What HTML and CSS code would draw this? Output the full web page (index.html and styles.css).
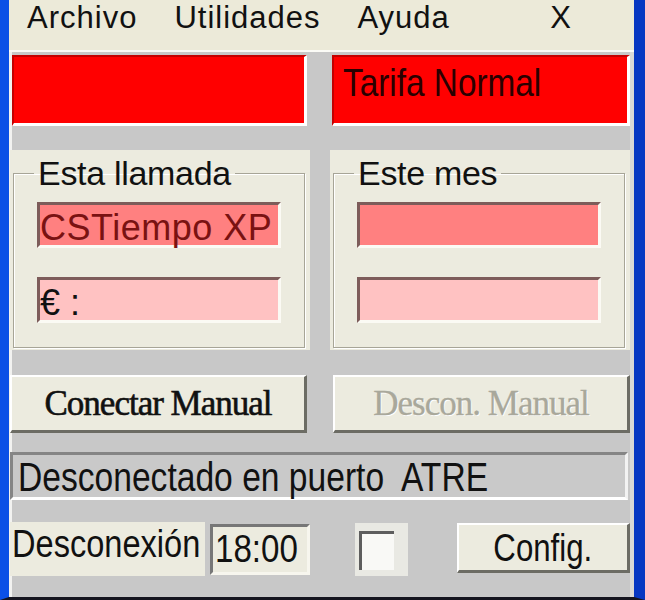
FILE: index.html
```html
<!DOCTYPE html>
<html lang="es">
<head>
<meta charset="utf-8">
<title>CSTiempo XP</title>
<link rel="stylesheet" href="styles.css">
</head>
<body>
<div class="window">
  <div class="client">
    <nav class="menubar">
      <span class="menu-item">Archivo</span>
      <span class="menu-item">Utilidades</span>
      <span class="menu-item">Ayuda</span>
      <span class="menu-item menu-close">X</span>
    </nav>
    <div class="tariff-row">
      <div class="tariff-box tariff-left"></div>
      <div class="tariff-box tariff-right"><span class="narrow tariff-text">Tarifa Normal</span></div>
    </div>
    <div class="groups">
      <div class="group">
        <fieldset class="frame">
          <legend class="legend">Esta llamada</legend>
          <div class="field field-salmon">CSTiempo XP</div>
          <div class="field field-pink">€ :</div>
        </fieldset>
      </div>
      <div class="group">
        <fieldset class="frame">
          <legend class="legend">Este mes</legend>
          <div class="field field-salmon"></div>
          <div class="field field-pink"></div>
        </fieldset>
      </div>
    </div>
    <div class="buttons">
      <button class="btn btn-wide" type="button">Conectar Manual</button>
      <button class="btn btn-wide" type="button" disabled>Descon. Manual</button>
    </div>
    <div class="status"><span class="narrow status-text">Desconectado en puerto&nbsp; ATRE</span></div>
    <div class="bottom-row">
      <span class="label"><span class="narrow label-text">Desconexión</span></span>
      <div class="time"><span class="narrow time-text">18:00</span></div>
      <div class="check-wrap"><span class="check"></span></div>
      <button class="btn btn-config" type="button"><span class="narrow config-text">Config.</span></button>
    </div>
  </div>
</div>
</body>
</html>
```

FILE: styles.css
```css
html, body {
  margin: 0;
  padding: 0;
  background: #c8c8c8;
}

.window {
  width: 645px;
  height: 600px;
  box-sizing: border-box;
  display: flex;
  border-left: 9px solid #0b50e6;
  border-right: 11px solid #0637c2;
  border-bottom: 3px solid #15151f;
  overflow: hidden;
}

.client {
  flex: 1;
  display: flex;
  flex-direction: column;
  background: #c8c8c8;
  box-shadow: inset 3px 0 0 #f2f2f0, inset -4px 0 0 #d9d9d6;
  font-family: "Liberation Sans", Arial, sans-serif;
  color: #111;
}

/* condensed look of the scaled bitmap font */
.narrow {
  display: inline-block;
  transform-origin: left center;
  white-space: nowrap;
}

/* Menu */
.menubar {
  height: 50px;
  background: #ecead9;
  border-bottom: 2px solid #fbfbf6;
  display: flex;
  align-items: flex-start;
  gap: 37px;
  padding: 0 62px 0 18px;
}

.menu-item {
  font-size: 31px;
  line-height: 36px;
  letter-spacing: 1px;
}

.menu-close {
  margin-left: auto;
}

/* Tariff row */
.tariff-row {
  display: flex;
  gap: 25px;
  margin-top: 3px;
  padding-left: 3px;
}

.tariff-box {
  height: 71px;
  box-sizing: border-box;
  background: #ff0000;
  border-top: 2px solid #c40000;
  border-left: 2px solid #c40000;
  border-bottom: 3px solid #ffffff;
  border-right: 3px solid #ffffff;
}

.tariff-left {
  width: 295px;
}

.tariff-right {
  width: 298px;
  padding: 5px 0 0 9px;
}

.tariff-text {
  font-size: 39px;
  line-height: 42px;
  color: #2a0000;
  transform: scaleX(0.855);
}

/* Groups */
.groups {
  display: flex;
  gap: 20px;
  margin-top: 24px;
  padding-left: 1px;
}

.group {
  width: 300px;
  height: 200px;
  box-sizing: border-box;
  background: #ecebdf;
  padding: 9px 5px 2px 3px;
  display: flex;
}

.frame {
  flex: 1;
  min-width: 0;
  margin: 0;
  padding: 0;
  border: 1px solid #a7a597;
  box-shadow: 1px 1px 0 #ffffff, inset 1px 1px 0 #ffffff;
}

.legend {
  margin-left: 20px;
  padding: 0 4px;
  font-size: 34px;
  line-height: 29px;
  letter-spacing: -0.3px;
  color: #111;
}

.field {
  width: 244px;
  height: 46px;
  box-sizing: border-box;
  margin-left: 23px;
  border-top: 3px solid #7d5c5a;
  border-left: 3px solid #7d5c5a;
  border-bottom: 3px solid #fbfaf4;
  border-right: 3px solid #fbfaf4;
  padding-top: 3px;
  font-size: 36px;
  line-height: 40px;
  white-space: nowrap;
}

.field-salmon {
  margin-top: 14px;
  background: #ff8080;
  color: #7a1212;
  letter-spacing: 0.5px;
}

.field-pink {
  margin-top: 29px;
  background: #ffc2c2;
  color: #111;
}

/* Buttons */
.buttons {
  display: flex;
  gap: 26px;
  margin-top: 25px;
  padding-left: 1px;
}

.btn {
  box-sizing: border-box;
  margin: 0;
  padding: 0;
  background: #ecebdf;
  border-top: 2px solid #ffffff;
  border-left: 2px solid #ffffff;
  border-bottom: 3px solid #6c6c64;
  border-right: 3px solid #6c6c64;
  color: #111;
}

.btn-wide {
  width: 297px;
  height: 58px;
  font-family: "Liberation Serif", "Times New Roman", serif;
  font-size: 35px;
  letter-spacing: -1px;
  -webkit-text-stroke: 0.6px currentColor;
}

.btn:disabled {
  color: #a9a89b;
  text-shadow: 1px 1px 0 #ffffff;
  -webkit-text-stroke: 0.3px currentColor;
}

/* Status */
.status {
  width: 618px;
  height: 48px;
  box-sizing: border-box;
  margin: 19px 0 0 1px;
  background: #c9c9c9;
  border-top: 3px solid #858585;
  border-left: 3px solid #858585;
  border-bottom: 3px solid #ffffff;
  border-right: 3px solid #f2f2f2;
  padding: 3px 0 0 5px;
  font-size: 40px;
  line-height: 39px;
}

.status-text {
  transform: scaleX(0.84);
}

/* Bottom row */
.bottom-row {
  display: flex;
  align-items: flex-start;
  margin: 22px 0 0 1px;
}

.label {
  width: 195px;
  height: 54px;
  box-sizing: border-box;
  background: #ecebdf;
  padding-left: 2px;
  font-size: 39px;
  line-height: 44px;
}

.label-text {
  transform: scaleX(0.835);
}

.time {
  width: 100px;
  height: 51px;
  box-sizing: border-box;
  margin: 2px 0 0 5px;
  background: #ecebdf;
  border-top: 3px solid #777;
  border-left: 3px solid #777;
  border-bottom: 3px solid #f7f6ee;
  border-right: 3px solid #f7f6ee;
  padding-left: 2px;
  font-size: 39px;
  line-height: 44px;
}

.time-text {
  transform: scaleX(0.85);
}

.check-wrap {
  width: 53px;
  height: 53px;
  box-sizing: border-box;
  margin: 1px 0 0 45px;
  background: #e9e9e3;
  padding: 8px 14px 6px 4px;
  display: flex;
}

.check {
  flex: 1;
  background: #f9f9f6;
  border-top: 3px solid #5e5e5e;
  border-left: 3px solid #5e5e5e;
}

.btn-config {
  width: 173px;
  height: 50px;
  margin: 1px 0 0 49px;
  font-size: 39px;
}

.config-text {
  transform: scaleX(0.8);
  transform-origin: center center;
}
```
